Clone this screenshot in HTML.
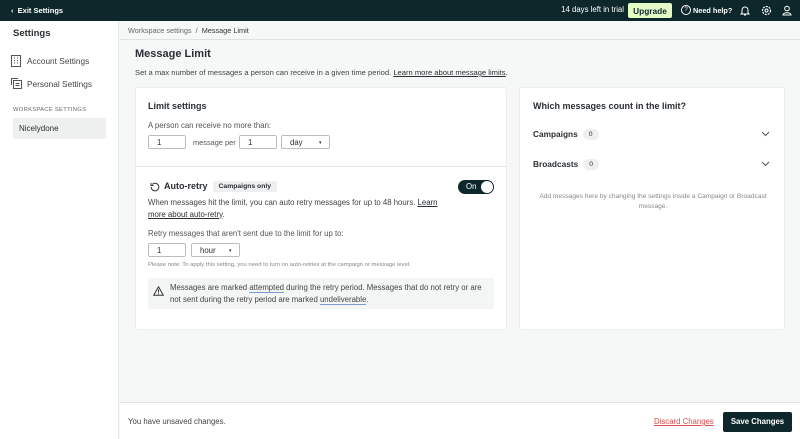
<!DOCTYPE html>
<html><head><meta charset="utf-8"><style>
*{box-sizing:border-box;margin:0;padding:0}
body{width:800px;height:439px;overflow:hidden;font-family:"Liberation Sans",sans-serif;color:#2a2f33;background:#f6f7f7;position:relative;font-size:8px}
.abs{position:absolute}
.top{left:0;top:0;width:800px;height:21px;background:#0e272b;color:#fff}
.side{left:0;top:21px;width:119px;height:418px;background:#fff;border-right:1px solid #e3e6e6}
.crumb{left:120px;top:21px;width:680px;height:19px;border-bottom:1px solid #dfe2e2;font-size:7.3px;color:#666}
.card{background:#fff;border:1px solid #eceeee;border-radius:2px}
.inp{position:absolute;height:14px;border:1px solid #b9bfc1;border-radius:2px;background:#fff;font-size:7.8px;padding:2px 0 0 8px}
a{color:#2a2f33;text-decoration:underline}
.pill{display:inline-block;background:#eef0f0;border-radius:7px;font-size:6.8px;padding:2px 6px;margin-left:5px;vertical-align:1px;font-weight:normal}
</style></head><body>
<div class="abs top">
  <div class="abs" style="left:11px;top:6px;font-size:7.5px;font-weight:bold">‹ &nbsp;Exit Settings</div>
  <div class="abs" style="left:540px;width:84px;text-align:right;top:5px;font-size:7.8px">14 days left in trial</div>
  <div class="abs" style="left:628px;top:3px;width:44px;height:15px;background:#e4fbc6;color:#0e272b;border-radius:2px;font-size:8.3px;font-weight:bold;text-align:center;padding-top:3px">Upgrade</div>
  <div class="abs" style="left:681px;top:5px;width:10px;height:10px;border:1px solid #fff;border-radius:50%;font-size:6px;text-align:center;line-height:8px">?</div>
  <div class="abs" style="left:693px;top:6px;font-size:7.3px;font-weight:bold">Need help?</div>
  <svg class="abs" style="left:740px;top:5px" width="10" height="11" viewBox="0 0 10 11"><path d="M2 8V5a3 3 0 016 0v3l1 1H1z M4 10h2" fill="none" stroke="#fff" stroke-width="1"/></svg>
  <svg class="abs" style="left:761px;top:5px" width="11" height="11" viewBox="0 0 11 11"><circle cx="5.5" cy="5.5" r="4" fill="none" stroke="#fff" stroke-width="1.2" stroke-dasharray="2 1"/><circle cx="5.5" cy="5.5" r="1.5" fill="none" stroke="#fff"/></svg>
  <svg class="abs" style="left:782px;top:5px" width="10" height="11" viewBox="0 0 10 11"><circle cx="5" cy="3.5" r="2.3" fill="none" stroke="#fff"/><path d="M1 10c0-3 8-3 8 0z" fill="none" stroke="#fff"/></svg>
</div>
<div class="abs side">
  <div class="abs" style="left:13px;top:7px;font-size:9.5px;font-weight:bold">Settings</div>
  <svg class="abs" style="left:11px;top:34px" width="10" height="12" viewBox="0 0 10 12"><rect x="0.5" y="0.5" width="9" height="11" fill="none" stroke="#555"/><path d="M3 3h1M6 3h1M3 5.5h1M6 5.5h1M3 8h1M6 8h1" stroke="#555"/></svg>
  <div class="abs" style="left:27px;top:35px;font-size:8.3px;color:#444">Account Settings</div>
  <svg class="abs" style="left:11px;top:57px" width="11" height="11" viewBox="0 0 11 11"><path d="M0.5 7V0.5H7" fill="none" stroke="#555"/><rect x="2.5" y="2.5" width="8" height="8" fill="none" stroke="#555"/><path d="M4.5 5.5h4M4.5 7.5h4" stroke="#555"/></svg>
  <div class="abs" style="left:27px;top:58px;font-size:8.3px;color:#444">Personal Settings</div>
  <div class="abs" style="left:13px;top:86px;font-size:5.8px;color:#666;letter-spacing:.3px">WORKSPACE SETTINGS</div>
  <div class="abs" style="left:13px;top:97px;width:93px;height:21px;background:#eef0f0;border-radius:2px;font-size:8px;padding:6px 0 0 6px">Nicelydone</div>
</div>
<div class="abs crumb"><div style="padding:5px 0 0 8px">Workspace settings &nbsp;/&nbsp; <span style="color:#333">Message Limit</span></div></div>
<div class="abs" style="left:135px;top:48px;font-size:11px;font-weight:bold">Message Limit</div>
<div class="abs" style="left:135px;top:68px;font-size:7.6px;color:#444">Set a max number of messages a person can receive in a given time period. <a>Learn more about message limits</a>.</div>
<div class="abs card" style="left:135px;top:87px;width:372px;height:243px">
  <div class="abs" style="left:12px;top:13px;font-size:9px;font-weight:bold">Limit settings</div>
  <div class="abs" style="left:12px;top:33px;font-size:7.8px;color:#555">A person can receive no more than:</div>
  <div class="inp" style="left:12px;top:47px;width:38px">1</div>
  <div class="abs" style="left:57px;top:50px;font-size:7.4px;color:#555">message per</div>
  <div class="inp" style="left:103px;top:47px;width:38px">1</div>
  <div class="inp" style="left:145px;top:47px;width:49px">day <span style="position:absolute;left:37px;font-size:5px;top:4px">▾</span></div>
  <div class="abs" style="left:0;top:78px;width:370px;border-top:1px solid #e3e6e6"></div>
  <svg class="abs" style="left:14px;top:94px" width="10" height="10" viewBox="0 0 10 10"><path d="M2.2 2.5A3.8 3.8 0 1 1 1.2 5" fill="none" stroke="#333" stroke-width="1"/><path d="M1 1v2.5h2.5" fill="none" stroke="#333"/></svg>
  <div class="abs" style="left:28px;top:93px;font-size:9px;font-weight:bold">Auto-retry<span class="pill" style="border-radius:2px;font-weight:bold">Campaigns only</span></div>
  <div class="abs" style="left:322px;top:92px;width:36px;height:14px;background:#0e272b;border-radius:7px;color:#fff;font-size:7.8px;padding:2px 0 0 8px">On<div style="position:absolute;right:1px;top:1px;width:12px;height:12px;background:#fff;border-radius:50%"></div></div>
  <div class="abs" style="left:12px;top:109px;width:300px;font-size:7.8px;line-height:11.5px;color:#444">When messages hit the limit, you can auto retry messages for up to 48 hours. <a>Learn more about auto-retry</a>.</div>
  <div class="abs" style="left:12px;top:141px;font-size:7.8px;color:#555">Retry messages that aren't sent due to the limit for up to:</div>
  <div class="inp" style="left:12px;top:155px;width:38px">1</div>
  <div class="inp" style="left:55px;top:155px;width:49px">hour <span style="position:absolute;left:37px;font-size:5px;top:4px">▾</span></div>
  <div class="abs" style="left:12px;top:174px;font-size:5.9px;color:#888">Please note: To apply this setting, you need to turn on auto-retries at the campaign or message level.</div>
  <div class="abs" style="left:12px;top:190px;width:346px;height:31px;background:#f4f5f5;border-radius:2px">
    <svg class="abs" style="left:5px;top:8px" width="11" height="10" viewBox="0 0 11 10"><path d="M5.5 0.8L10.3 9.3H0.7z" fill="none" stroke="#333"/><path d="M5.5 3.5v3M5.5 7.3v1" stroke="#333"/></svg>
    <div class="abs" style="left:22px;top:4px;width:320px;font-size:7.8px;line-height:11.5px;color:#444">Messages are marked <span style="border-bottom:1px solid #7a9bd6">attempted</span> during the retry period. Messages that do not retry or are not sent during the retry period are marked <span style="border-bottom:1px solid #7a9bd6">undeliverable</span>.</div>
  </div>
</div>
<div class="abs card" style="left:519px;top:87px;width:266px;height:243px">
  <div class="abs" style="left:13px;top:13px;font-size:9px;font-weight:bold">Which messages count in the limit?</div>
  <div class="abs" style="left:13px;top:41px;font-size:8.3px;font-weight:bold">Campaigns<span class="pill">0</span></div>
  <svg class="abs" style="left:241px;top:43px" width="9" height="6" viewBox="0 0 9 6"><path d="M1 1l3.5 3.5L8 1" fill="none" stroke="#555"/></svg>
  <div class="abs" style="left:13px;top:71px;font-size:8.3px;font-weight:bold">Broadcasts<span class="pill">0</span></div>
  <svg class="abs" style="left:241px;top:73px" width="9" height="6" viewBox="0 0 9 6"><path d="M1 1l3.5 3.5L8 1" fill="none" stroke="#555"/></svg>
  <div class="abs" style="left:12px;top:104px;width:242px;text-align:center;font-size:6.6px;line-height:10px;color:#888">Add messages here by changing the settings inside a Campaign or Broadcast message.</div>
</div>
<div class="abs" style="left:120px;top:402px;width:680px;height:37px;background:#fff;border-top:1px solid #e3e6e6">
  <div class="abs" style="left:8px;top:14px;font-size:7.8px;color:#444">You have unsaved changes.</div>
  <div class="abs" style="left:534px;top:14px;font-size:7.8px;color:#e04a4a;text-decoration:underline">Discard Changes</div>
  <div class="abs" style="left:603px;top:9px;width:69px;height:20px;background:#0e272b;border-radius:2px;color:#fff;font-size:7.8px;font-weight:bold;text-align:center;padding-top:5px">Save Changes</div>
</div>
</body></html>
